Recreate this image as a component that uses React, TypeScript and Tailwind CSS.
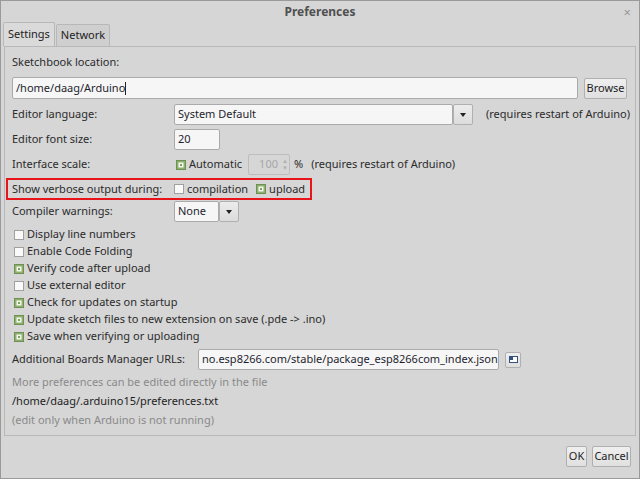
import React from 'react';

const font = { fontFamily: '"Noto Sans", "Open Sans", sans-serif' };

const Check = ({ on }: { on?: boolean }) => (
  <svg width="10" height="10" viewBox="0 0 10 10" className="shrink-0">
    {on ? (
      <>
        <rect x="0.5" y="0.5" width="9" height="9" fill="#8eb26e" stroke="#6f8f55" />
        <rect x="2.5" y="2.5" width="5" height="5" fill="#f4f7f0" />
        <rect x="4" y="4" width="2" height="2" fill="#7ea35e" />
      </>
    ) : (
      <rect x="0.5" y="0.5" width="9" height="9" fill="#fafafa" stroke="#a0a0a0" />
    )}
  </svg>
);

const ArrowBtn = () => (
  <div className="w-[20px] h-full shrink-0 border border-[#b0b0b0] rounded-[2px] bg-gradient-to-b from-[#ececec] to-[#dcdcdc] flex items-center justify-center">
    <svg width="6" height="4" viewBox="0 0 6 4">
      <path d="M0 0h6L3 4z" fill="#222" />
    </svg>
  </div>
);

const Btn = ({ children, w }: { children: React.ReactNode; w: string }) => (
  <div className={`${w} h-[21px] shrink-0 border border-[#b0b0b0] rounded-[2px] bg-gradient-to-b from-[#efefef] to-[#e0e0e0] flex items-center justify-center text-[#222]`}>
    {children}
  </div>
);

const Field = ({ children, cls }: { children?: React.ReactNode; cls: string }) => (
  <div className={`${cls} h-full shrink-0 bg-[#f6f6f6] border border-[#aaaaaa] rounded-[2px] flex items-center px-[3px] text-[#1e1e2e] overflow-hidden whitespace-nowrap`}>
    {children}
  </div>
);

const checks: [string, boolean][] = [
  ['Display line numbers', false],
  ['Enable Code Folding', false],
  ['Verify code after upload', true],
  ['Use external editor', false],
  ['Check for updates on startup', true],
  ['Update sketch files to new extension on save (.pde -> .ino)', true],
  ['Save when verifying or uploading', true],
];

export default function App() {
  return (
    <div
      className="w-[640px] h-[479px] bg-[#d6d6d6] border border-[#9a9a9a] flex flex-col text-[11px] text-[#2b2b2b] overflow-hidden whitespace-nowrap"
      style={font}
    >
      {/* title bar */}
      <div className="h-[21px] relative flex items-center justify-center shrink-0">
        <span className="font-bold text-[12px] text-[#505050]">Preferences</span>
        <span className="absolute right-[8px] top-[2px] text-[#9a9a9a] text-[13px]">×</span>
      </div>

      {/* tabs */}
      <div className="flex items-end pl-[2px] h-[24px] shrink-0">
        <div className="h-[24px] px-[4px] flex items-center bg-[#dadada] border border-b-0 border-[#b8b8b8] rounded-t-[2px] text-[#222]">
          Settings
        </div>
        <div className="h-[22px] px-[4px] ml-[1px] flex items-center bg-[#cfcfcf] border border-b-0 border-[#b8b8b8] rounded-t-[2px] text-[#222]">
          Network
        </div>
      </div>

      {/* panel */}
      <div className="mx-[3px] h-[390px] border border-[#b8b8b8] bg-[#d6d6d6] pt-[6px] pl-[7px] pr-[8px] flex flex-col shrink-0">
        <div className="h-[18px] flex items-center">Sketchbook location:</div>
        <div className="mt-[6px] h-[22px] flex items-center gap-[6px]">
          <Field cls="flex-1 shrink">/home/daag/Arduino<span className="w-px h-[13px] bg-[#222]" /></Field>
          <Btn w="w-[43px]">Browse</Btn>
        </div>

        <div className="mt-[5px] h-[21px] flex items-center">
          <div className="w-[162px] shrink-0">Editor language:</div>
          <Field cls="w-[279px]">System Default</Field>
          <ArrowBtn />
          <span className="ml-[13px]">(requires restart of Arduino)</span>
        </div>

        <div className="mt-[4px] h-[21px] flex items-center">
          <div className="w-[162px] shrink-0">Editor font size:</div>
          <Field cls="w-[46px]">20</Field>
        </div>

        <div className="mt-[4px] h-[21px] flex items-center">
          <div className="w-[164px] shrink-0">Interface scale:</div>
          <Check on />
          <span className="ml-[3px]">Automatic</span>
          <div className="ml-[6px] w-[42px] h-full shrink-0 border border-[#bdbdbd] rounded-[2px] bg-[#d6d6d6] flex items-center justify-end">
            <span className="text-[#a6a6a6] mr-[3px]">100</span>
            <div className="w-[8px] h-full flex flex-col items-center justify-center text-[6px] leading-[7px] text-[#b0b0b0]">
              <span>▲</span>
              <span>▼</span>
            </div>
          </div>
          <span className="ml-[4px]">%</span>
          <span className="ml-[8px]">(requires restart of Arduino)</span>
        </div>

        <div className="mt-[3px] h-[22px] -ml-[6px] w-[306px] border-2 border-[#e8141c] flex items-center pl-[4px]">
          <div className="w-[162px] shrink-0">Show verbose output during:</div>
          <Check />
          <span className="ml-[3px]">compilation</span>
          <span className="ml-[8px] flex"><Check on /></span>
          <span className="ml-[3px]">upload</span>
        </div>

        <div className="mt-[1px] h-[21px] flex items-center">
          <div className="w-[162px] shrink-0">Compiler warnings:</div>
          <Field cls="w-[45px]">None</Field>
          <ArrowBtn />
        </div>

        <div className="mt-[4px] flex flex-col">
          {checks.map(([label, on]) => (
            <div key={label} className="h-[17px] flex items-center pl-[2px]">
              <Check on={on} />
              <span className="ml-[3px]">{label}</span>
            </div>
          ))}
        </div>

        <div className="mt-[4px] h-[21px] flex items-center">
          <div className="w-[186px] shrink-0">Additional Boards Manager URLs:</div>
          <Field cls="w-[301px] text-[#1d1d4a]">no.esp8266.com/stable/package_esp8266com_index.json</Field>
          <div className="ml-[6px] w-[16px] h-[16px] shrink-0 border border-[#b0b0b0] rounded-[2px] bg-gradient-to-b from-[#efefef] to-[#dedede] flex items-center justify-center">
            <svg width="9" height="7" viewBox="0 0 9 7">
              <rect x="0.5" y="0.5" width="8" height="6" fill="#ffffff" stroke="#34507e" />
              <rect x="0" y="0" width="4" height="4" fill="#34507e" />
            </svg>
          </div>
        </div>

        <div className="mt-[3px] h-[19px] flex items-center text-[#8a8a8a]">More preferences can be edited directly in the file</div>
        <div className="h-[19px] flex items-center text-[#1e1e1e]">/home/daag/.arduino15/preferences.txt</div>
        <div className="h-[19px] flex items-center text-[#8a8a8a]">(edit only when Arduino is not running)</div>
      </div>

      {/* buttons */}
      <div className="flex-1 flex items-center justify-end gap-[5px] pr-[8px] pb-[2px]">
        <Btn w="w-[21px]">OK</Btn>
        <Btn w="w-[39px]">Cancel</Btn>
      </div>
    </div>
  );
}
